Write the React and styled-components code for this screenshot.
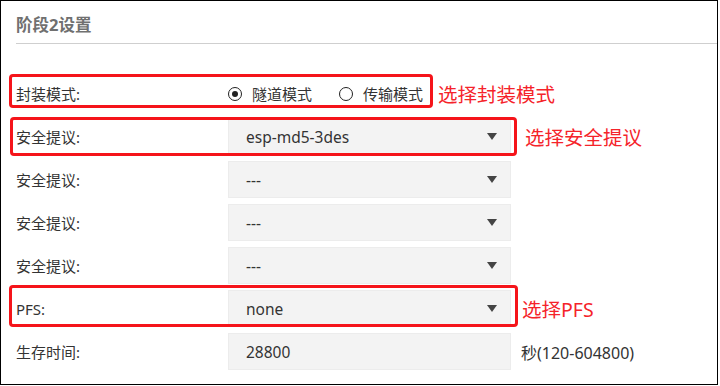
import React from "react";
import styled, { createGlobalStyle } from "styled-components";

const GlobalStyle = createGlobalStyle`
  body {
    margin: 0;
    background: #ffffff;
    font-family: "Noto Sans", "Noto Sans CJK SC", sans-serif;
  }
`;

const proposals = [
  { value: "esp-md5-3des", note: "选择安全提议", box: { left: -6, top: -1, width: 507, height: 39 }, gap: 14 },
  { value: "---" },
  { value: "---" },
  { value: "---" },
];

const App = () => {
  return (
    <>
      <GlobalStyle />
      <Frame>
        <Header>
          <Title>阶段2设置</Title>
        </Header>
        <Form>
          <Row>
            <Highlight $left={-7} $top={-1} $width={424} $height={34} />
            <Label>封装模式:</Label>
            <RadioGroup>
              <RadioOption>
                <Radio $checked />
                隧道模式
              </RadioOption>
              <RadioOption>
                <Radio />
                传输模式
              </RadioOption>
            </RadioGroup>
            <Note $gap={15}>选择封装模式</Note>
          </Row>

          {proposals.map((p, i) => (
            <Row key={i}>
              {p.box && (
                <Highlight
                  $left={p.box.left}
                  $top={p.box.top}
                  $width={p.box.width}
                  $height={p.box.height}
                />
              )}
              <Label>安全提议:</Label>
              <Select>
                <span>{p.value}</span>
                <Arrow />
              </Select>
              {p.note && <Note $gap={p.gap}>{p.note}</Note>}
            </Row>
          ))}

          <Row>
            <Highlight $left={-7} $top={-5} $width={509} $height={42} />
            <Label>PFS:</Label>
            <Select>
              <span>none</span>
              <Arrow />
            </Select>
            <Note $gap={11}>选择PFS</Note>
          </Row>

          <Row>
            <Label>生存时间:</Label>
            <Input>28800</Input>
            <Suffix>秒(120-604800)</Suffix>
          </Row>
        </Form>
      </Frame>
    </>
  );
};

const Frame = styled.div`
  width: 718px;
  height: 385px;
  box-sizing: border-box;
  border: 1px solid #000;
  background: #fff;
  overflow: hidden;
`;

const Header = styled.div`
  margin-left: 15px;
  padding: 14px 0 8px;
  border-bottom: 1px solid #cfcfcf;
`;

const Title = styled.h2`
  margin: 0;
  font-size: 16.5px;
  line-height: 20px;
  font-weight: 700;
  color: #707070;
`;

const Form = styled.div`
  display: flex;
  flex-direction: column;
  gap: 6px;
  padding: 31px 0 0 15px;
`;

const Row = styled.div`
  position: relative;
  display: flex;
  align-items: center;
  height: 37px;
`;

const Highlight = styled.div`
  position: absolute;
  left: ${(p) => p.$left}px;
  top: ${(p) => p.$top}px;
  width: ${(p) => p.$width}px;
  height: ${(p) => p.$height}px;
  box-sizing: border-box;
  border: 3px solid #f5141a;
  border-radius: 4px;
  pointer-events: none;
`;

const Label = styled.div`
  width: 212px;
  flex-shrink: 0;
  font-size: 15px;
  color: #333;
`;

const RadioGroup = styled.div`
  display: flex;
  align-items: center;
  gap: 27px;
`;

const RadioOption = styled.label`
  display: flex;
  align-items: center;
  gap: 10px;
  font-size: 15px;
  color: #333;
`;

const Radio = styled.span`
  width: 14px;
  height: 14px;
  box-sizing: border-box;
  border: 1.5px solid #222;
  border-radius: 50%;
  display: flex;
  align-items: center;
  justify-content: center;

  &::after {
    content: "";
    width: 6px;
    height: 6px;
    border-radius: 50%;
    background: ${(p) => (p.$checked ? "#222" : "transparent")};
  }
`;

const Select = styled.div`
  width: 283px;
  height: 37px;
  box-sizing: border-box;
  display: flex;
  align-items: center;
  justify-content: space-between;
  padding: 0 13px 0 17px;
  background: #f3f3f3;
  border: 1px solid #ececec;
  font-size: 15.5px;
  color: #333;
`;

const Input = styled(Select)``;

const Arrow = styled.span`
  width: 0;
  height: 0;
  border-left: 5.5px solid transparent;
  border-right: 5.5px solid transparent;
  border-top: 7px solid #444;
`;

const Note = styled.div`
  margin-left: ${(p) => p.$gap}px;
  font-size: 19.5px;
  color: #f5232a;
  white-space: nowrap;
`;

const Suffix = styled.div`
  margin-left: 10px;
  font-size: 16px;
  color: #333;
`;

export default App;
